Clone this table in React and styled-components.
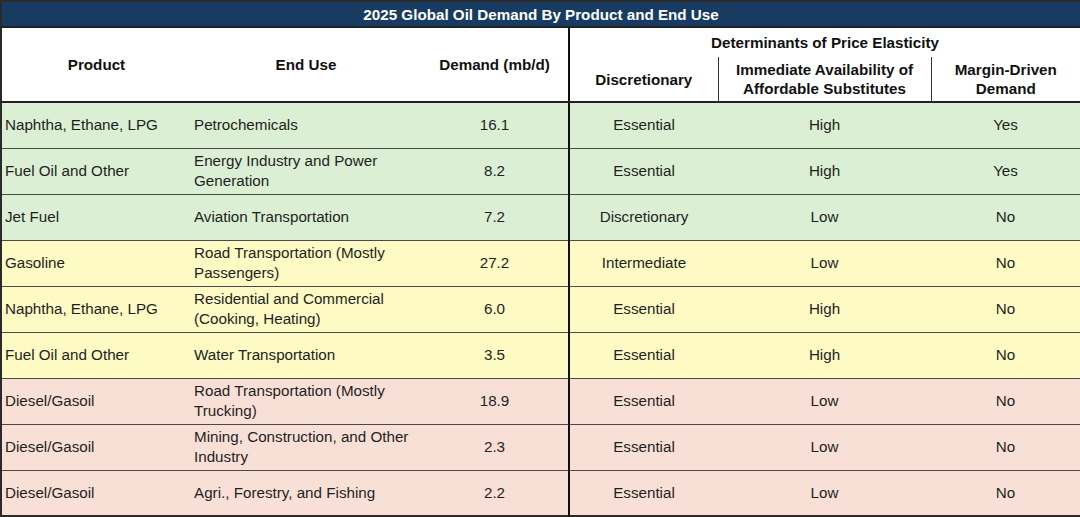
import React from "react";
import styled, { createGlobalStyle } from "styled-components";

const GlobalStyle = createGlobalStyle`
    html, body {
        margin: 0;
        padding: 0;
        background: #ffffff;
    }
    body {
        font-family: "Liberation Sans", Arial, sans-serif;
    }
`;

const tones = {
    green: "#daefd3",
    yellow: "#fdfac4",
    pink: "#f9e0d6",
};

const Table = styled.table`
    width: 1080px;
    border-collapse: collapse;
    table-layout: fixed;
    font-size: 15.2px;
    color: #1f1f1f;
    border: 2px solid #2a2a2a;
    border-right-color: #6b6b6b;
`;

const TitleCell = styled.th`
    height: 24px;
    padding: 0;
    background: #173b61;
    color: #ffffff;
    font-weight: bold;
    text-align: center;
    border-bottom: 2px solid #222;
`;

const Head = styled.th`
    padding: 0 4px;
    font-weight: bold;
    color: #111;
    line-height: 19px;
    text-align: center;
    vertical-align: middle;
    background: #ffffff;
    height: ${props => props.$h || "auto"};
    border-left: ${props => (props.$thick ? "2px solid #111" : props.$thin ? "1px solid #333" : "none")};
    border-bottom: ${props => (props.$open ? "none" : "2px solid #222")};
`;

const Row = styled.tr`
    background: ${props => tones[props.$tone]};
    height: 46px;
    border-top: 1px solid #4a4a4a;
`;

const Cell = styled.td`
    padding: 0 3px;
    line-height: 20px;
    text-align: ${props => (props.$left ? "left" : "center")};
    vertical-align: middle;
    border-left: ${props => (props.$thick ? "2px solid #111" : "none")};
`;

const rows = [
    { product: "Naphtha, Ethane, LPG", use: ["Petrochemicals"], demand: "16.1", disc: "Essential", avail: "High", margin: "Yes", tone: "green" },
    { product: "Fuel Oil and Other", use: ["Energy Industry and Power", "Generation"], demand: "8.2", disc: "Essential", avail: "High", margin: "Yes", tone: "green" },
    { product: "Jet Fuel", use: ["Aviation Transportation"], demand: "7.2", disc: "Discretionary", avail: "Low", margin: "No", tone: "green" },
    { product: "Gasoline", use: ["Road Transportation (Mostly", "Passengers)"], demand: "27.2", disc: "Intermediate", avail: "Low", margin: "No", tone: "yellow" },
    { product: "Naphtha, Ethane, LPG", use: ["Residential and Commercial", "(Cooking, Heating)"], demand: "6.0", disc: "Essential", avail: "High", margin: "No", tone: "yellow" },
    { product: "Fuel Oil and Other", use: ["Water Transportation"], demand: "3.5", disc: "Essential", avail: "High", margin: "No", tone: "yellow" },
    { product: "Diesel/Gasoil", use: ["Road Transportation (Mostly", "Trucking)"], demand: "18.9", disc: "Essential", avail: "Low", margin: "No", tone: "pink" },
    { product: "Diesel/Gasoil", use: ["Mining, Construction, and Other", "Industry"], demand: "2.3", disc: "Essential", avail: "Low", margin: "No", tone: "pink" },
    { product: "Diesel/Gasoil", use: ["Agri., Forestry, and Fishing"], demand: "2.2", disc: "Essential", avail: "Low", margin: "No", tone: "pink" },
];

const Lines = ({ parts }) =>
    parts.map((p, i) => (
        <React.Fragment key={i}>
            {i > 0 && <br />}
            {p}
        </React.Fragment>
    ));

export default function App() {
    return (
        <>
            <GlobalStyle />
            <Table>
                <colgroup>
                    <col style={{ width: 190 }} />
                    <col style={{ width: 230 }} />
                    <col style={{ width: 148 }} />
                    <col style={{ width: 149 }} />
                    <col style={{ width: 213 }} />
                    <col style={{ width: 150 }} />
                </colgroup>
                <thead>
                    <tr>
                        <TitleCell colSpan={6}>2025 Global Oil Demand By Product and End Use</TitleCell>
                    </tr>
                    <tr>
                        <Head rowSpan={2}>Product</Head>
                        <Head rowSpan={2}>End Use</Head>
                        <Head rowSpan={2}>Demand (mb/d)</Head>
                        <Head colSpan={3} $thick $open $h="29px">Determinants of Price Elasticity</Head>
                    </tr>
                    <tr>
                        <Head $thick $h="44px">Discretionary</Head>
                        <Head $thin>
                            Immediate Availability of
                            <br />
                            Affordable Substitutes
                        </Head>
                        <Head $thin>
                            Margin-Driven
                            <br />
                            Demand
                        </Head>
                    </tr>
                </thead>
                <tbody>
                    {rows.map((r, i) => (
                        <Row key={i} $tone={r.tone}>
                            <Cell $left>{r.product}</Cell>
                            <Cell $left>
                                <Lines parts={r.use} />
                            </Cell>
                            <Cell>{r.demand}</Cell>
                            <Cell $thick>{r.disc}</Cell>
                            <Cell>{r.avail}</Cell>
                            <Cell>{r.margin}</Cell>
                        </Row>
                    ))}
                </tbody>
            </Table>
        </>
    );
}
